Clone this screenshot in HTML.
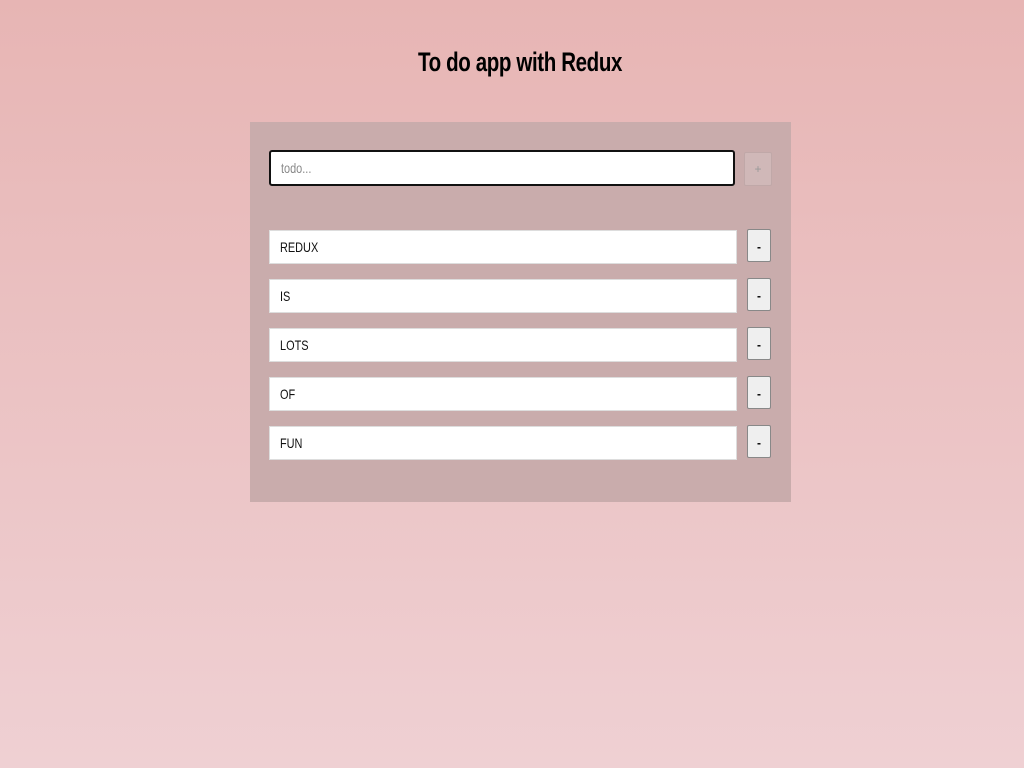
<!DOCTYPE html>
<html><head><style>
html,body{margin:0;height:768px;}
body{background:linear-gradient(#e7b5b4,#efd0d3);font-family:"Liberation Sans",sans-serif;position:relative;overflow:hidden}
h1{position:absolute;top:47px;left:0;width:1040px;text-align:center;margin:0;font-size:27px;font-weight:bold;color:#000;letter-spacing:-0.5px;transform:scaleX(0.76);transform-origin:520px 0}
.panel{position:absolute;left:250px;top:122px;width:541px;height:380px;background:#c9acac}
.in{position:absolute;background:#fff;box-sizing:border-box;font-size:14px;padding-left:10px;display:flex;align-items:center;color:#111}
.in span{display:inline-block;transform:scaleX(0.78);transform-origin:0 50%}
.main{left:19px;top:28px;width:466px;height:36px;border:2px solid #111;border-radius:3px;color:#888}
.plus{position:absolute;left:494px;top:30px;width:28px;height:34px;box-sizing:border-box;background:#d0b8b8;border:1px solid #c0a8a8;border-radius:2px;color:#999;font-size:12px;text-align:center;line-height:32px}
.row{left:19px;width:468px;height:34px;border:1px solid #ddd}
.btn{position:absolute;left:497px;width:24px;height:33px;box-sizing:border-box;background:#efefef;border:1px solid #888;border-radius:2px;text-align:center;line-height:34px;font-size:12px;font-weight:bold}
</style></head><body>
<h1>To do app with Redux</h1>
<div class="panel">
<div class="in main"><span>todo...</span></div>
<div class="plus">+</div>
<div class="in row" style="top:108px"><span>REDUX</span></div><div class="btn" style="top:107px">-</div>
<div class="in row" style="top:157px"><span>IS</span></div><div class="btn" style="top:156px">-</div>
<div class="in row" style="top:206px"><span>LOTS</span></div><div class="btn" style="top:205px">-</div>
<div class="in row" style="top:255px"><span>OF</span></div><div class="btn" style="top:254px">-</div>
<div class="in row" style="top:304px"><span>FUN</span></div><div class="btn" style="top:303px">-</div>
</div>
</body></html>
